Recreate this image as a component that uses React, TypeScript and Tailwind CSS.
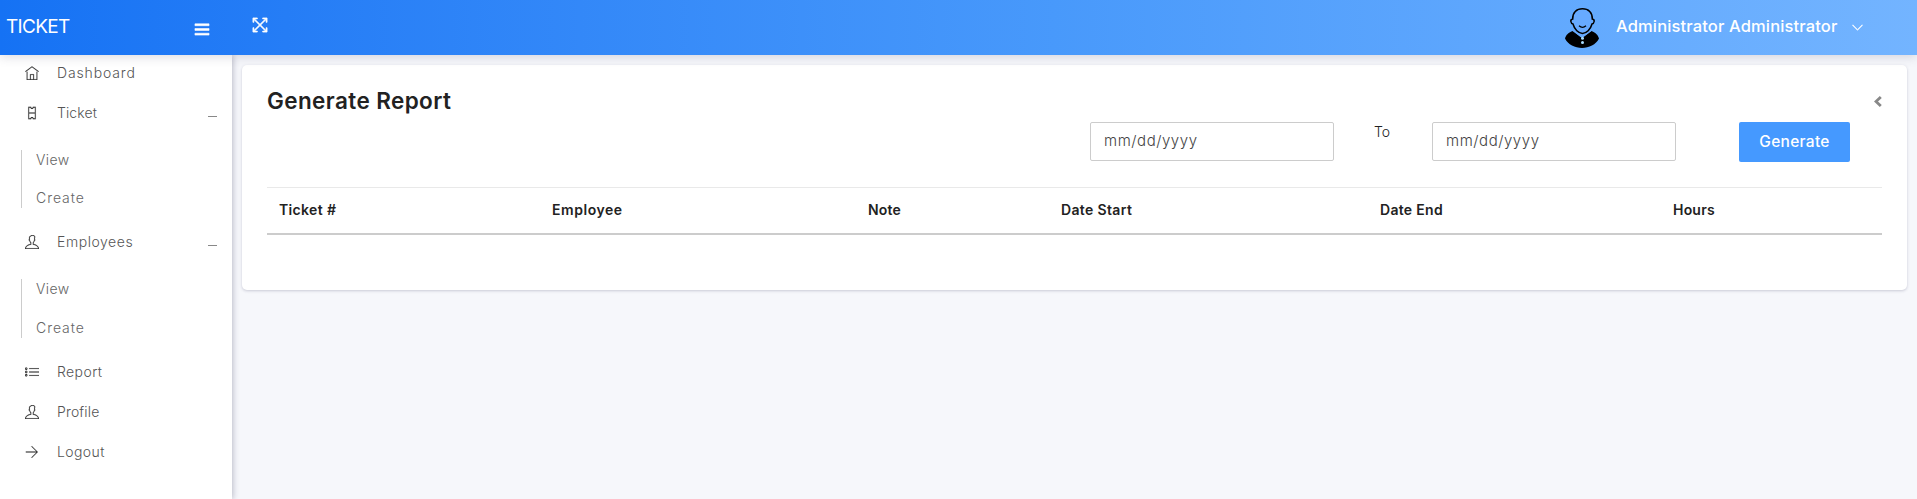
import React from "react";
import { TfiHome, TfiTicket, TfiUser, TfiList, TfiArrowRight, TfiAngleDown, TfiMenu, TfiFullscreen } from "react-icons/tfi";

function Item({ icon, label, spacing, open }: { icon: React.ReactNode; label: string; spacing: string; open?: boolean }) {
  return (
    <a className="flex h-10 items-center pl-[25px] pr-[15px] text-[#555]">
      <span className="flex w-[14px] justify-center text-[14px] text-[#333] [&>svg]:stroke-[0.15]">{icon}</span>
      <span className={`ml-[18px] flex-1 whitespace-nowrap text-sm font-[350] ${spacing}`}>{label}</span>
      {open && <span className="mt-[7px] h-px w-[9px] bg-[#888]" />}
    </a>
  );
}

function SubMenu({ gap }: { gap: string }) {
  return (
    <div className={`ml-[21px] flex flex-col border-l border-[#ccc] pl-[14px] text-sm font-light text-[#666] ${gap}`}>
      <span className="h-5 leading-5 tracking-[0.4px]">View</span>
      <span className="h-5 leading-5 tracking-[0.95px]">Create</span>
    </div>
  );
}

function Avatar() {
  return (
    <svg width="34" height="40" viewBox="0 0 34 40">
      <path d="M7.500 23C3 25 1 27 0 30.500c3 6 10 9.500 17 9.500s14-3.500 17-9.500c-1-3.500-3-5.500-7.500-7.500L17 30z" fill="#000" />
      <path d="M10 29h14v4H10z" fill="#000" />
      <path d="M7.500 22.500L17 30l10-7.500z" fill="#67aaff" />
      <circle cx="17.500" cy="30.300" r="1.500" fill="#a9ddff" />
      <circle cx="17.500" cy="34.500" r="1.500" fill="#a9ddff" />
      <path d="M7.700 11C7.500 4.500 11.500.8 17.500.8S27.500 4.500 27.300 11c3 .5 2 4.500-.3 5-1.500 5.500-5.500 9.500-9.500 9.500S9.500 21.500 8 16c-2.300-.5-3.300-4.500-.3-5z" fill="#67aaff" stroke="#000" strokeWidth="1.500" />
      <path d="M14 17.800q3.500 3 7 0" fill="none" stroke="#000" strokeWidth="1.300" />
    </svg>
  );
}

export default function App() {
  return (
    <div className="flex h-[499px] flex-col overflow-hidden bg-[#f6f7fb] font-['Inter','Noto_Sans',sans-serif]">
      <header className="relative z-20 flex h-[55px] shrink-0 items-center bg-linear-to-r from-[#1572f4] via-[#4899fb] via-55% to-[#73b4ff] text-white shadow-[0_2px_10px_rgba(60,60,90,0.18)]">
        <div className="flex w-[232px] items-center justify-between pl-[6px] pr-[22px]">
          <span className="text-[19px] tracking-[-0.7px]">TICKET</span>
          <TfiMenu className="mt-[3px] size-4 stroke-[0.6]" />
        </div>
        <TfiFullscreen className="mb-[5px] ml-5 size-4 stroke-[0.8]" />
        <div className="ml-auto flex items-center pr-[54px]">
          <Avatar />
          <span className="ml-[17px] mb-[3px] w-[224px] whitespace-nowrap text-[16.5px] font-medium tracking-[0.14px]">Administrator Administrator</span>
          <TfiAngleDown className="ml-3 size-[11px] stroke-[0.9]" />
        </div>
      </header>
      <div className="flex flex-1">
        <nav className="z-10 w-[232px] shrink-0 bg-white shadow-[1px_0_6px_rgba(43,43,80,0.3)]">
          <div className="-mt-[2px]">
            <Item icon={<TfiHome />} label="Dashboard" spacing="tracking-[0.85px]" />
            <Item icon={<TfiTicket />} label="Ticket" spacing="tracking-[0.1px]" open />
          </div>
          <div className="pb-[14px] pt-[17px]"><SubMenu gap="gap-[18px]" /></div>
          <Item icon={<TfiUser />} label="Employees" spacing="tracking-[0.55px]" open />
          <div className="pb-[14px] pt-[17px]"><SubMenu gap="gap-[19px]" /></div>
          <Item icon={<TfiList />} label="Report" spacing="tracking-[0.4px]" />
          <Item icon={<TfiUser />} label="Profile" spacing="tracking-[0.15px]" />
          <Item icon={<TfiArrowRight />} label="Logout" spacing="tracking-[0.4px]" />
        </nav>
        <main className="flex-1 pl-[10px] pr-[10px] pt-[10px]">
          <section className="h-[225px] rounded-[5px] bg-white px-[25px] pt-[22px] shadow-[0_1px_3px_rgba(43,43,80,0.22)]">
            <div className="flex h-[28px] items-center justify-between">
              <h1 className="text-[22.5px] font-semibold tracking-[0.4px] text-[#222]">Generate Report</h1>
              <svg className="h-[11px] w-2 fill-none stroke-[#888] stroke-[2.8]" viewBox="0 0 8 11">
                <path d="M6.800 1L2 5.500l4.800 4.500" />
              </svg>
            </div>
            <div className="mt-[7px] flex h-[65px] items-start justify-end pr-8 text-sm">
              <div className="h-[39px] w-[244px] rounded-[2px] border border-[#ccc] pl-[13px] text-[15px] font-[350] leading-[36px] tracking-[0.55px] text-[#444]">mm/dd/yyyy</div>
              <span className="ml-[40px] w-[58px] font-[350] leading-5 text-[#222]">To</span>
              <div className="h-[39px] w-[244px] rounded-[2px] border border-[#ccc] pl-[13px] text-[15px] font-[350] leading-[36px] tracking-[0.55px] text-[#444]">mm/dd/yyyy</div>
              <button className="ml-[63px] h-10 w-[111px] rounded-[2px] bg-[#4599ff] text-[15.5px] font-medium tracking-[0.3px] text-white">Generate</button>
            </div>
            <div className="grid h-[48px] grid-cols-[273px_316px_193px_319px_293px_221px] items-center border-b-2 border-t border-b-[#ccc] border-t-[#e9e9e9] text-sm font-semibold text-[#222] [&>span]:pb-[2px] [&>span]:pl-3">
              <span className="tracking-[0.35px]">Ticket #</span>
              <span className="tracking-[0.55px]">Employee</span>
              <span className="tracking-[0.15px]">Note</span>
              <span className="tracking-[0.35px]">Date Start</span>
              <span className="tracking-[0.3px]">Date End</span>
              <span className="tracking-[0.2px]">Hours</span>
            </div>
          </section>
        </main>
      </div>
    </div>
  );
}
